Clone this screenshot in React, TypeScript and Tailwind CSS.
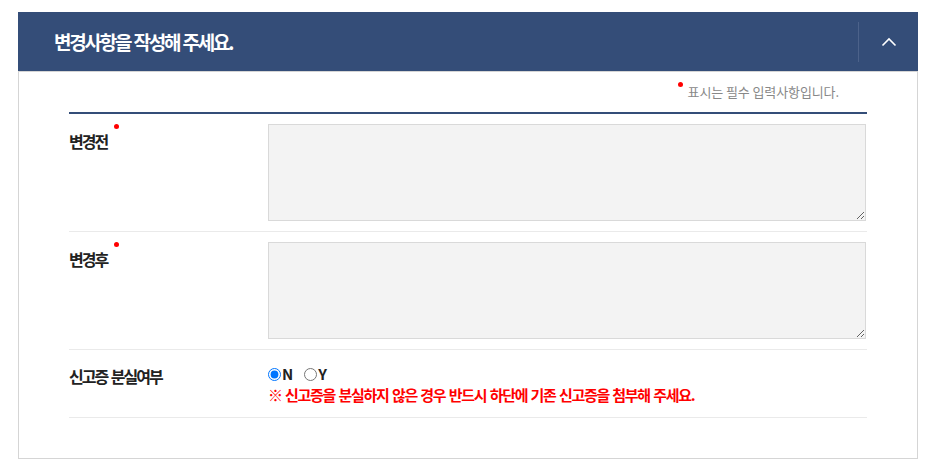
import React from "react";

const KR = { fontFamily: '"Noto Sans CJK KR", "Noto Sans", sans-serif' };

function Dot({ className }: { className: string }) {
  return <span className={`absolute w-[5px] h-[5px] rounded-full bg-[#ff0000] ${className}`} />;
}

export default function App() {
  return (
    <div className="bg-white min-h-[471px] pt-3 pl-[18px]" style={KR}>
      <div className="w-[900px]">
        <div className="h-[59px] bg-[#344d78] flex items-center">
          <h2 className="flex-1 pl-[36px] text-white text-[19px] font-bold tracking-[-2.2px] [word-spacing:1px] leading-none">
            변경사항을 작성해 주세요.
          </h2>
          <div className="w-px h-[40px] bg-[#4c628a]" />
          <button className="w-[59px] h-full flex items-center justify-center">
            <svg width="16" height="10" viewBox="0 0 16 10" fill="none">
              <path d="M1.5 8.5 L8 2 L14.5 8.5" stroke="white" strokeWidth="1.6" />
            </svg>
          </button>
        </div>
        <div className="border border-[#d5d5d5] px-[50px] pb-[40px]">
          <div className="h-[40px] flex justify-end pt-[11px] pr-[28px]">
            <span className="relative pl-[10px] text-[13px] leading-[18px] text-[#888] tracking-[-0.1px]">
              <Dot className="left-0 top-[-1px]" />
              표시는 필수 입력사항입니다.
            </span>
          </div>
          <div className="border-t-2 border-[#344d78]">
            <div className="flex py-[10px] border-b border-[#eaeaea]">
              <div className="w-[199px] shrink-0">
                <span className="relative inline-block mt-[6px] text-[16px] leading-[22px] font-bold text-[#222] tracking-[-2px]">
                  변경전
                  <Dot className="right-[-12px] top-[-6px]" />
                </span>
              </div>
              <textarea className="block w-[598px] h-[97px] bg-[#f3f3f3] border border-[#d9d9d9] outline-none" />
            </div>
            <div className="flex py-[10px] border-b border-[#eaeaea]">
              <div className="w-[199px] shrink-0">
                <span className="relative inline-block mt-[6px] text-[16px] leading-[22px] font-bold text-[#222] tracking-[-2px]">
                  변경후
                  <Dot className="right-[-12px] top-[-6px]" />
                </span>
              </div>
              <textarea className="block w-[598px] h-[97px] bg-[#f3f3f3] border border-[#d9d9d9] outline-none" />
            </div>
            <div className="flex pt-[14px] pb-[12px] border-b border-[#eaeaea]">
              <div className="w-[199px] shrink-0">
                <span className="inline-block text-[16px] leading-[22px] font-bold text-[#222] tracking-[-2px] [word-spacing:2px]">
                  신고증 분실여부
                </span>
              </div>
              <div>
                <div className="flex items-center h-5 text-[15px] font-bold text-[#222]">
                  <label className="flex items-center">
                    <input type="radio" name="lost" defaultChecked className="m-0 w-[13px] h-[13px]" />
                    <span className="ml-[1px]">N</span>
                  </label>
                  <label className="flex items-center ml-[11px]">
                    <input type="radio" name="lost" className="m-0 w-[13px] h-[13px]" />
                    <span className="ml-[1px]">Y</span>
                  </label>
                </div>
                <p className="text-[15px] leading-5 font-bold text-[#ff0000] tracking-[-1.3px] [word-spacing:1.3px] mt-[1px]">
                  ※ 신고증을 분실하지 않은 경우 반드시 하단에 기존 신고증을 첨부해 주세요.
                </p>
              </div>
            </div>
          </div>
        </div>
      </div>
    </div>
  );
}
